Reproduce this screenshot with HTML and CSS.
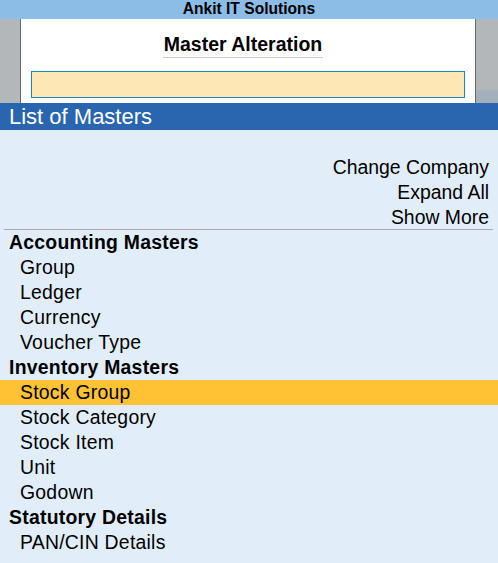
FILE: index.html
```html
<!DOCTYPE html>
<html>
<head>
<meta charset="utf-8">
<link rel="stylesheet" href="styles.css">
</head>
<body>
<div class="titlebar">Ankit IT Solutions</div>
<div class="header">
  <div class="side side-left"></div>
  <div class="panel">
    <div class="panel-title"><span>Master Alteration</span></div>
    <div class="input-box"></div>
  </div>
  <div class="side side-right"><div class="side-bottom"></div></div>
</div>
<div class="listbar">List of Masters</div>
<div class="body">
  <div class="actions">
    <div class="row">Change Company</div>
    <div class="row">Expand All</div>
    <div class="row">Show More</div>
  </div>
  <div class="sep"></div>
  <div class="list">
    <div class="row head">Accounting Masters</div>
    <div class="row item">Group</div>
    <div class="row item">Ledger</div>
    <div class="row item">Currency</div>
    <div class="row item">Voucher Type</div>
    <div class="row head">Inventory Masters</div>
    <div class="row item selected">Stock Group</div>
    <div class="row item">Stock Category</div>
    <div class="row item">Stock Item</div>
    <div class="row item">Unit</div>
    <div class="row item">Godown</div>
    <div class="row head">Statutory Details</div>
    <div class="row item">PAN/CIN Details</div>
  </div>
</div>
</body>
</html>
```

FILE: styles.css
```css
* { box-sizing: border-box; }
html, body {
  margin: 0;
  padding: 0;
  height: 100%;
}
body {
  font-family: "Liberation Sans", Arial, sans-serif;
  color: #000;
  background: #e1eefa;
  width: 498px;
  height: 563px;
  overflow: hidden;
}
.titlebar {
  height: 19px;
  background: #8bbde6;
  text-align: center;
  font-weight: bold;
  font-size: 15.6px;
  line-height: 18px;
}
.header {
  display: flex;
  height: 84px;
}
.side {
  background: #b4b7ba;
}
.side-left {
  width: 21px;
  border-right: 1px solid #6b6b6b;
  flex: none;
}
.side-right {
  width: 23px;
  border-left: 1px solid #6b6b6b;
  flex: none;
  display: flex;
  flex-direction: column;
  justify-content: flex-end;
}
.side-bottom {
  height: 13px;
  background: #a3afbb;
}
.panel {
  flex: 1;
  background: #fff;
  padding-top: 13px;
}
.panel-title {
  text-align: center;
  font-weight: bold;
  font-size: 19.5px;
  line-height: 24px;
  padding-right: 10px;
}
.panel-title span {
  display: inline-block;
  border-bottom: 1px solid #cccccc;
  padding: 0 1px 1px;
}
.input-box {
  margin: 13px 10px 0 10px;
  height: 27px;
  background: #fde7b5;
  border: 1px solid #1889c7;
}
.listbar {
  height: 27px;
  background: #2a66b0;
  color: #fff;
  font-size: 22px;
  line-height: 27px;
  padding-left: 9px;
}
.body {
  padding-top: 25px;
}
.row {
  height: 25px;
  line-height: 25px;
  font-size: 19.4px;
  white-space: nowrap;
}
.actions {
  text-align: right;
  padding-right: 9px;
}
.sep {
  height: 1px;
  background: #a8a8a8;
  margin: -1px 5px 0 4px;
}
.list .row {
  letter-spacing: 0.25px;
}
.head {
  font-weight: bold;
  padding-left: 9px;
}
.item {
  padding-left: 20px;
}
.selected {
  background: #fec234;
}
```
